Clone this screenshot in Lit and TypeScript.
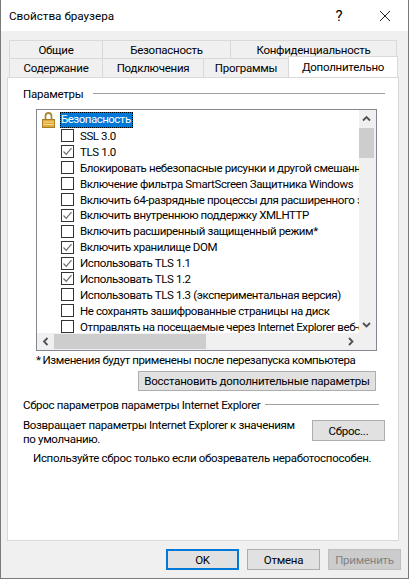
import { LitElement, html, css, svg } from "lit";
import { customElement } from "lit/decorators.js";

const rows: [string, boolean][] = [
  ["SSL 3.0", false],
  ["TLS 1.0", true],
  ["Блокировать небезопасные рисунки и другой смешанный контент", false],
  ["Включение фильтра SmartScreen Защитника Windows", false],
  ["Включить 64-разрядные процессы для расширенного защищенного режима", false],
  ["Включить внутреннюю поддержку XMLHTTP", true],
  ["Включить расширенный защищенный режим*", false],
  ["Включить хранилище DOM", true],
  ["Использовать TLS 1.1", true],
  ["Использовать TLS 1.2", true],
  ["Использовать TLS 1.3 (экспериментальная версия)", false],
  ["Не сохранять зашифрованные страницы на диск", false],
  ["Отправлять на посещаемые через Internet Explorer веб-сайты", false],
];

const chev = (d: string) => svg`<svg class="chev" viewBox="0 0 9 9" width="9" height="9"><path d=${d} fill="none" stroke="#505050" stroke-width="1.8"/></svg>`;

@customElement("app-root")
export class AppRoot extends LitElement {
  static styles = css`
    :host { display: block; width: 409px; height: 579px; font-family: Roboto, "Open Sans", sans-serif; font-size: 11.5px; letter-spacing: -0.25px; color: #000; }
    * { box-sizing: border-box; }
    .win { width: 409px; height: 579px; background: #f0f0f0; border-left: 1px solid #7a7a7a; border-right: 1px solid #7a7a7a; border-bottom: 1px solid #7a7a7a; display: flex; flex-direction: column; overflow: hidden; }
    .title { height: 31px; background: #fff; display: flex; align-items: center; padding-left: 8px; font-size: 11.7px; letter-spacing: 0; flex: none; }
    .title .t { flex: 1; }
    .tbtn { width: 46px; height: 31px; display: flex; align-items: center; justify-content: center; font-size: 15px; }
    .tabs { flex: none; padding: 9px 8px 0 6px; height: 46px; display: flex; flex-direction: column; }
    .tabrow { display: flex; height: 18px; padding-left: 2px; }
    .tabrow2 { height: 19px; }
    .tab { background: #f0f0f0; border: 1px solid #d9d9d9; border-bottom: none; margin-right: -1px; display: flex; align-items: center; justify-content: center; white-space: nowrap; }
    .tab.active { background: #fff; height: 21px; margin-top: -2px; border-color: #d9d9d9; z-index: 1; position: relative; margin-bottom: -1px; }
    .panel { margin: 0 9px 0 6px; height: 464px; background: #fff; border: 1px solid #d9d9d9; flex: none; display: flex; flex-direction: column; padding: 7px 16px 0 15px; }
    .gh { display: flex; align-items: center; height: 17px; gap: 10px; }
    .gh .ln { flex: 1; height: 1px; background: #a0a0a0; }
    .g1 { margin-right: -3px; }
    .list { margin: 7px 0 0 13px; width: 341px; height: 242px; border: 1px solid #828790; display: grid; grid-template-columns: 1fr 17px; grid-template-rows: 1fr 17px; flex: none; letter-spacing: -0.4px; }
    .vp { overflow: hidden; padding-top: 1px; padding-left: 5px; min-width: 0; }
    .row { height: 15.9px; display: flex; align-items: center; white-space: nowrap; padding-left: 19px; gap: 6px; }
    .row.head { padding-left: 0; gap: 5px; height: 17px; }
    .lock { flex: none; width: 13px; height: 16px; }
    .sel { background: #0078d7; color: #fff; outline: 1px dotted #000; outline-offset: -1px; padding: 0 2px 0 1px; height: 16px; line-height: 15px; letter-spacing: -0.5px; }
    .cb { flex: none; width: 13px; height: 13px; border: 1px solid #333; background: #fff; display: block; }
    .cb svg { display: block; }
    .vbar, .hbar, .corner { background: #f0f0f0; }
    .vbar { display: flex; flex-direction: column; align-items: center; padding-right: 2px; }
    .hbar { display: flex; align-items: center; }
    .arr { flex: none; display: flex; align-items: center; justify-content: center; }
    .vbar .arr { height: 17px; width: 15px; }
    .hbar .arr { width: 17px; height: 16px; }
    .vth { width: 15px; height: 30px; background: #cdcdcd; margin-top: 1px; }
    .vsp { flex: 1; width: 100%; }
    .hth { width: 152px; height: 15px; background: #cdcdcd; }
    .hsp { flex: 1; }
    .chev { display: block; }
    .note { margin: 1px 0 0 13px; height: 16px; display: flex; align-items: center; white-space: nowrap; letter-spacing: -0.4px; }
    .ast { margin-right: 2px; }
    .btn { background: #e1e1e1; border: 1px solid #adadad; display: flex; align-items: center; justify-content: center; white-space: nowrap; flex: none; }
    .restore { width: 238px; height: 20px; margin: 3px 0 0 115px; }
    .g2 { margin-top: 5px; margin-right: 3px; gap: 5px; letter-spacing: -0.33px; }
    .reset { display: flex; margin-top: 4px; justify-content: space-between; }
    .reset .d { line-height: 14px; padding-top: 1px; white-space: nowrap; letter-spacing: -0.33px; }
    .reset .btn { width: 73px; height: 21px; margin-right: -3px; margin-top: 3px; }
    .warn { margin: 4px 0 0 10px; white-space: nowrap; height: 16px; display: flex; align-items: center; letter-spacing: -0.3px; }
    .foot { flex: 1; display: flex; justify-content: flex-end; padding: 8px 7px 0 0; gap: 8px; }
    .foot .btn { width: 73px; height: 21px; }
    .ok { border: 2px solid #0078d7; }
    .dis { background: #ccc; border-color: #bfbfbf; color: #838383; }
  `;

  render() {
    return html`<div class="win">
      <div class="title"><span class="t">Свойства браузера</span>
        <span class="tbtn">?</span>
        <span class="tbtn"><svg width="12" height="12" viewBox="0 0 12 12"><path d="M1 1 11 11M11 1 1 11" stroke="#222" stroke-width="1" fill="none"/></svg></span>
      </div>
      <div class="tabs">
        <div class="tabrow">
          <div class="tab" style="width:94px">Общие</div>
          <div class="tab" style="width:129px">Безопасность</div>
          <div class="tab" style="width:167px">Конфиденциальность</div>
        </div>
        <div class="tabrow tabrow2">
          <div class="tab" style="width:94px">Содержание</div>
          <div class="tab" style="width:102px">Подключения</div>
          <div class="tab" style="width:86px">Программы</div>
          <div class="tab active" style="width:110px">Дополнительно</div>
        </div>
      </div>
      <div class="panel">
        <div class="gh g1"><span>Параметры</span><span class="ln"></span></div>
        <div class="list">
          <div class="vp">
            <div class="row head">
              <svg class="lock" viewBox="0 0 13 16">
                <path d="M3.5 8V4a3 3 0 0 1 6 0V8" fill="none" stroke="#a98a3a" stroke-width="1.8"/>
                <rect x="0.5" y="7.5" width="12" height="8" fill="#e0a93c" stroke="#a97f26"/>
                <path d="M1 10h11M1 12.5h11" stroke="#f6dc8e" stroke-width="1"/>
              </svg>
              <span class="sel">Безопасность</span>
            </div>
            ${rows.map(([t, c]) => html`<div class="row"><span class="cb">${c ? html`<svg width="11" height="11" viewBox="0 0 11 11"><path d="M1.5 5.5 4.2 8.3 9.5 2.2" fill="none" stroke="#6a6a6a" stroke-width="1.2"/></svg>` : ""}</span><span>${t}</span></div>`)}
          </div>
          <div class="vbar">
            <div class="arr">${chev("M1 6.5 4.5 3 8 6.5")}</div>
            <div class="vth"></div><div class="vsp"></div>
            <div class="arr">${chev("M1 3 4.5 6.5 8 3")}</div>
          </div>
          <div class="hbar">
            <div class="arr">${chev("M6.5 1 3 4.5 6.5 8")}</div>
            <div class="hth"></div><div class="hsp"></div>
            <div class="arr">${chev("M3 1 6.5 4.5 3 8")}</div>
          </div>
          <div class="corner"></div>
        </div>
        <div class="note"><span class="ast">*</span><span>Изменения будут применены после перезапуска компьютера</span></div>
        <div class="btn restore">Восстановить дополнительные параметры</div>
        <div class="gh g2"><span>Сброс параметров параметры Internet Explorer</span><span class="ln"></span></div>
        <div class="reset">
          <div class="d">Возвращает параметры Internet Explorer к значениям<br>по умолчанию.</div>
          <div class="btn">Сброс...</div>
        </div>
        <div class="warn">Используйте сброс только если обозреватель неработоспособен.</div>
      </div>
      <div class="foot">
        <div class="btn ok">OK</div>
        <div class="btn">Отмена</div>
        <div class="btn dis">Применить</div>
      </div>
    </div>`;
  }
}
